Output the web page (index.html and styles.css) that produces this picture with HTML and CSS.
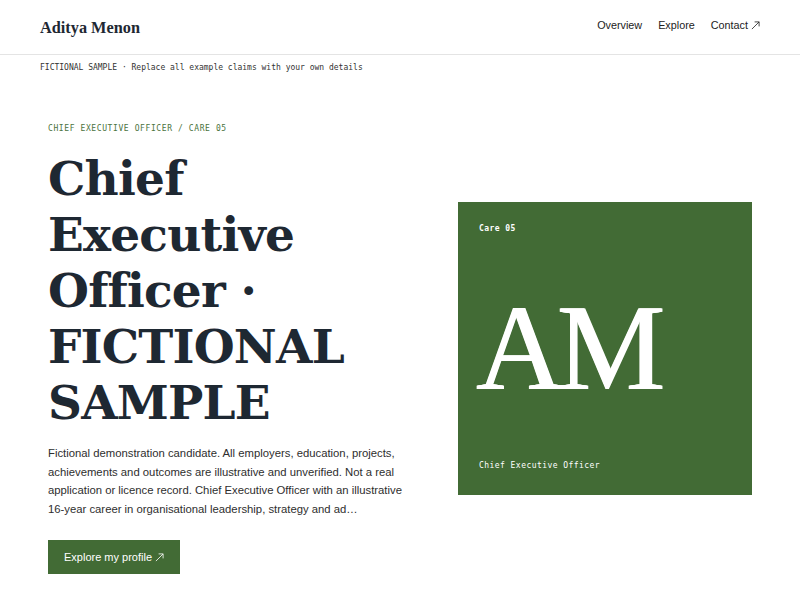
FILE: index.html
```html
<!DOCTYPE html>
<html lang="en">
<head>
<meta charset="utf-8">
<title>Aditya Menon</title>
<link rel="stylesheet" href="styles.css">
</head>
<body>
<header class="site-header">
  <a class="brand" href="#">Aditya Menon</a>
  <nav class="nav">
    <a href="#">Overview</a>
    <a href="#">Explore</a>
    <a href="#">Contact <svg class="arrow" viewBox="0 0 10 10" width="10" height="10"><path d="M1 9 L9 1 M4 1 H9 V6" fill="none" stroke="currentColor" stroke-width="0.9"/></svg></a>
  </nav>
</header>
<div class="banner">FICTIONAL SAMPLE · Replace all example claims with your own details</div>
<main class="hero">
  <div class="hero-text">
    <p class="eyebrow">CHIEF EXECUTIVE OFFICER / CARE 05</p>
    <h1 class="title">Chief Executive Officer · FICTIONAL SAMPLE</h1>
    <p class="lead">Fictional demonstration candidate. All employers, education, projects, achievements and outcomes are illustrative and unverified. Not a real application or licence record. Chief Executive Officer with an illustrative 16-year career in organisational leadership, strategy and ad…</p>
    <a class="button" href="#">Explore my profile <svg class="arrow" viewBox="0 0 10 10" width="10" height="10"><path d="M1 9 L9 1 M4 1 H9 V6" fill="none" stroke="currentColor" stroke-width="0.9"/></svg></a>
  </div>
  <div class="card">
    <div class="card-top">Care 05</div>
    <div class="monogram">AM</div>
    <div class="card-bottom">Chief Executive Officer</div>
  </div>
</main>
</body>
</html>
```
FILE: styles.css
```css
html, body {
  margin: 0;
  padding: 0;
  background: #ffffff;
}
body {
  font-family: "Liberation Sans", Arial, sans-serif;
  color: #1e2832;
}
a {
  color: inherit;
  text-decoration: none;
}
.site-header {
  height: 54px;
  padding: 0 40px;
  display: flex;
  align-items: center;
  justify-content: space-between;
  border-bottom: 1px solid #e4e4e4;
}
.brand {
  font-family: "Liberation Serif", "Times New Roman", serif;
  font-weight: 700;
  font-size: 16.3px;
  color: #1e2832;
  padding-top: 2px;
}
.nav {
  display: flex;
  gap: 16px;
  font-size: 10.8px;
  color: #222;
  padding-bottom: 4px;
}
.nav a {
  display: inline-flex;
  align-items: center;
  gap: 3px;
}
.arrow {
  width: 9px;
  height: 9px;
}
.banner {
  padding: 7px 40px 0;
  font-family: "DejaVu Sans Mono", "Liberation Mono", monospace;
  font-size: 8px;
  line-height: 12px;
  color: #333;
}
.hero {
  display: grid;
  grid-template-columns: minmax(0, 1fr) 294px;
  gap: 48px;
  align-items: center;
  padding: 49px 48px 0;
}
.eyebrow {
  margin: 0;
  font-family: "DejaVu Sans Mono", "Liberation Mono", monospace;
  font-size: 8px;
  line-height: 12px;
  letter-spacing: 0.6px;
  color: #4b7340;
}
.title {
  margin: 16px 0 0;
  font-family: "DejaVu Serif", Georgia, serif;
  font-weight: 700;
  font-size: 47px;
  line-height: 56px;
  letter-spacing: -0.8px;
  color: #1e2832;
}
.lead {
  margin: 13px 0 0;
  font-size: 11.3px;
  line-height: 18.6px;
  color: #2e2e2e;
}
.button {
  display: inline-flex;
  align-items: center;
  gap: 3px;
  margin-top: 22px;
  padding: 10px 16px 10px 16px;
  font-size: 11px;
  line-height: 14px;
  color: #ffffff;
  background: #426b35;
}
.card {
  height: 293px;
  box-sizing: border-box;
  padding: 21px 21px 23px;
  background: #426b35;
  color: #ffffff;
  display: flex;
  flex-direction: column;
  justify-content: space-between;
}
.card-top,
.card-bottom {
  font-family: "DejaVu Sans Mono", "Liberation Mono", monospace;
  font-size: 8px;
  line-height: 12px;
  letter-spacing: 0.45px;
  font-weight: 700;
}
.card-bottom {
  font-weight: 400;
}
.monogram {
  font-family: "Liberation Serif", "Times New Roman", serif;
  font-size: 122px;
  line-height: 1;
  letter-spacing: -0.06em;
  margin-left: -3px;
  text-shadow: 0.6px 0 0 #ffffff, -0.6px 0 0 #ffffff;
}
```
